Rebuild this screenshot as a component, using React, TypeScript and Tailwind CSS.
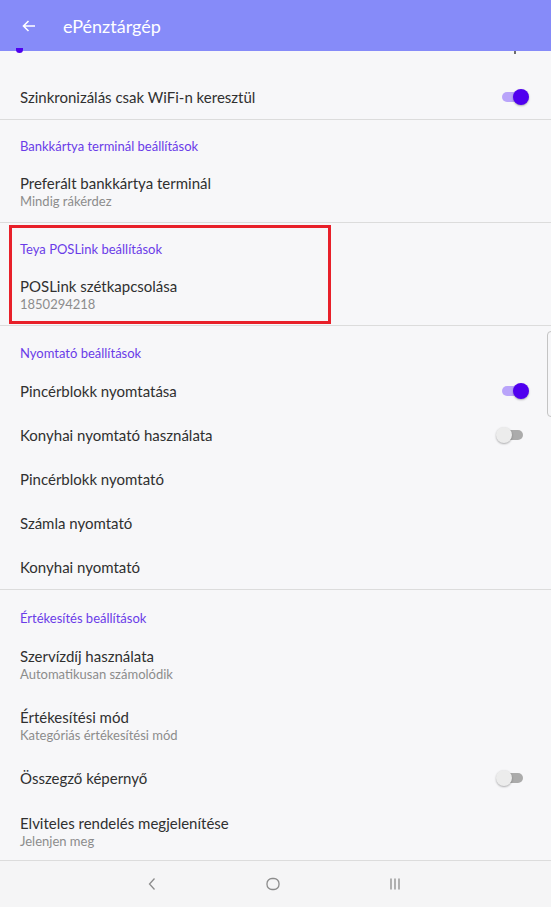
import React from "react";

const FONT = { fontFamily: "Lato, 'Open Sans', sans-serif" };

function Toggle({ on }: { on: boolean }) {
  return (
    <div className="relative h-4 w-[33px]">
      <div
        className={`absolute left-[6px] top-[3px] h-[10px] w-[21px] rounded-full ${
          on ? "bg-[#b9a4fa]" : "bg-[#ababab]"
        }`}
      />
      <div
        className={`absolute top-0 h-4 w-4 rounded-full shadow-[0_1px_2px_rgba(0,0,0,0.3)] ${
          on ? "right-0 bg-[#5000ef]" : "left-0 bg-[#ececec]"
        }`}
      />
    </div>
  );
}

function SectionHeader({ title, className }: { title: string; className: string }) {
  return (
    <div className={`px-5 text-[13px] leading-[18px] text-[#6a3ce8] ${className}`}>
      {title}
    </div>
  );
}

function TwoLine({
  title,
  sub,
  className,
}: {
  title: string;
  sub: string;
  className: string;
}) {
  return (
    <div className={`px-5 ${className}`}>
      <p className="text-[15px] leading-5 text-[#303030]">{title}</p>
      <p className="text-[13px] leading-4 text-[#8c8c8c]">{sub}</p>
    </div>
  );
}

function SingleLine({
  title,
  toggle,
  className = "h-[44px]",
}: {
  title: string;
  toggle?: boolean;
  className?: string;
}) {
  return (
    <div className={`flex items-center justify-between pl-5 pr-[22px] ${className}`}>
      <p className="text-[15px] leading-5 text-[#303030]">{title}</p>
      {toggle !== undefined && <Toggle on={toggle} />}
    </div>
  );
}

const Divider = () => <div className="h-px bg-[#dcdcdc]" />;

export default function App() {
  return (
    <div className="relative h-[907px] w-[551px] overflow-hidden bg-[#f7f7f9]" style={FONT}>
      <header className="flex h-[51px] items-center bg-[#868bf9] text-white">
        <div className="flex w-[63px] shrink-0 items-center pl-[21px]">
          <svg width="16" height="16" viewBox="0 0 16 16" fill="none">
            <path d="M14 8H2.5M7.5 3L2.5 8l5 5" stroke="white" strokeWidth="1.6" />
          </svg>
        </div>
        <span className="text-[18px] leading-6">ePénztárgép</span>
      </header>

      {/* tail of the row scrolled under the toolbar */}
      <div className="relative h-[24px]">
        <div className="absolute left-[16px] top-[-3px] h-[5px] w-[7px] rounded-b-full bg-[#5000ef]" />
        <div className="absolute left-[514px] top-0 h-[3px] w-[2px] bg-[#6d6d6d]" />
      </div>

      <SingleLine title="Szinkronizálás csak WiFi-n keresztül" toggle={true} />
      <Divider />

      <SectionHeader title="Bankkártya terminál beállítások" className="h-[43px] pt-[17px]" />
      <TwoLine
        title="Preferált bankkártya terminál"
        sub="Mindig rákérdez"
        className="h-[59px] pt-[10px]"
      />
      <Divider />

      <div className="relative">
        <SectionHeader title="Teya POSLink beállítások" className="h-[43px] pt-[17px]" />
        <TwoLine
          title="POSLink szétkapcsolása"
          sub="1850294218"
          className="h-[59px] pt-[10px]"
        />
        <div className="absolute left-[9px] top-[2px] h-[99px] w-[322px] border-[3px] border-[#e8202a]" />
      </div>
      <Divider />

      <SectionHeader title="Nyomtató beállítások" className="h-[43px] pt-[18px]" />
      <SingleLine title="Pincérblokk nyomtatása" toggle={true} />
      <SingleLine title="Konyhai nyomtató használata" toggle={false} />
      <SingleLine title="Pincérblokk nyomtató" />
      <SingleLine title="Számla nyomtató" />
      <SingleLine title="Konyhai nyomtató" />
      <Divider />

      <SectionHeader title="Értékesítés beállítások" className="h-[45px] pt-[19px]" />
      <TwoLine
        title="Szervízdíj használata"
        sub="Automatikusan számolódik"
        className="h-[61px] pt-[11px]"
      />
      <TwoLine
        title="Értékesítési mód"
        sub="Kategóriás értékesítési mód"
        className="h-[61px] pt-[11px]"
      />
      <SingleLine title="Összegző képernyő" toggle={false} className="h-[42px]" />
      <TwoLine
        title="Elviteles rendelés megjelenítése"
        sub="Jelenjen meg"
        className="h-[61px] pt-[14px]"
      />
      <Divider />

      <nav className="flex h-[46px] items-center bg-[#f5f5f6]">
        <svg className="ml-[147px]" width="10" height="14" viewBox="0 0 10 14" fill="none">
          <path d="M7.5 1.5L2.5 7l5 5.5" stroke="#8c8c8c" strokeWidth="1.3" />
        </svg>
        <svg className="ml-[109px]" width="14" height="14" viewBox="0 0 14 14" fill="none">
          <rect x="1" y="1.5" width="12" height="11" rx="5" stroke="#8c8c8c" strokeWidth="1.3" />
        </svg>
        <svg className="ml-[108px]" width="14" height="14" viewBox="0 0 14 14" fill="none">
          <path d="M3 1.5v11M7 1.5v11M11 1.5v11" stroke="#8c8c8c" strokeWidth="1.3" />
        </svg>
      </nav>

      {/* edge panel handle */}
      <div className="absolute left-[547px] top-[331px] h-[86px] w-[10px] rounded-[4px] border border-[#c4c4c4]" />
    </div>
  );
}
